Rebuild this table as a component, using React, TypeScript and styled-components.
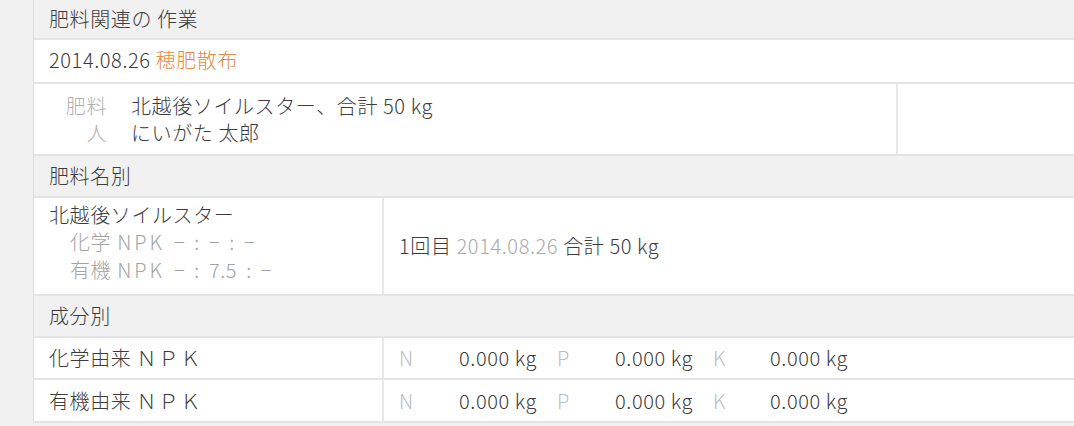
import React from "react";
import styled, { createGlobalStyle } from "styled-components";

const GlobalStyle = createGlobalStyle`
  * { box-sizing: border-box; }
  body {
    margin: 0;
    background: #f1f1f1;
    font-family: "Noto Sans CJK JP", "Noto Sans", sans-serif;
    font-size: 20px;
    font-weight: 300;
    letter-spacing: 0.6px;
    color: #3c3c3c;
    overflow: hidden;
  }
`;

const Panel = styled.div`
  margin-left: 33px;
  border-left: 1px solid #dcdcdc;
  background: #fff;
`;

const SectionHeader = styled.div<{ $h: number }>`
  height: ${(p) => p.$h}px;
  display: flex;
  align-items: center;
  padding: 0 15px;
  background: #f1f1f1;
  border-bottom: 2px solid #e4e4e4;
  line-height: 26px;
`;

const Row = styled.div<{ $h: number }>`
  height: ${(p) => p.$h}px;
  display: flex;
  border-bottom: 2px solid #e4e4e4;
  background: #fff;
`;

const Cell = styled.div<{ $w?: number; $divider?: boolean; $pb?: number }>`
  flex: ${(p) => (p.$w ? `0 0 ${p.$w}px` : "1 1 auto")};
  display: flex;
  flex-direction: column;
  justify-content: center;
  padding: 0 15px ${(p) => p.$pb ?? 0}px;
  border-right: ${(p) => (p.$divider ? "2px solid #e8e8e8" : "none")};
  line-height: 26px;
  white-space: nowrap;
`;

const Orange = styled.span`
  color: #e38b3f;
`;

const Muted = styled.span`
  color: #ababab;
`;

const Wide = styled.span`
  letter-spacing: 2px;
`;

const DetailGrid = styled.div`
  display: grid;
  grid-template-columns: 58px auto;
  column-gap: 24px;
  line-height: 27px;
`;

const DetailLabel = styled.span`
  text-align: right;
  color: #b0b0b0;
`;

const NameCell = styled.div`
  flex: 0 0 350px;
  padding: 4px 15px 7px;
  border-right: 2px solid #e8e8e8;
  white-space: nowrap;
`;

const Name = styled.div`
  line-height: 26px;
`;

const SubLine = styled.div`
  display: flex;
  align-items: baseline;
  padding-left: 21px;
  line-height: 27.5px;
  color: #a4a4a4;
  &:first-of-type {
    margin-top: 4px;
  }
`;

const NpkText = styled.span`
  margin-left: 6px;
  letter-spacing: 3px;
`;

const Ratio = styled.span`
  display: inline-flex;
  gap: 9px;
  margin-left: 9px;
`;

const NpkGrid = styled.div`
  display: grid;
  grid-template-columns: 60px 98px 58px 98px 57px auto;
  align-items: center;
`;

const NpkLabel = styled.span`
  color: #bdbdbd;
`;

const ratios = [
  { kind: "化学", parts: ["−", ":", "−", ":", "−"] },
  { kind: "有機", parts: ["−", ":", "7.5", ":", "−"] },
];

const components = ["化学由来", "有機由来"];

export default function App() {
  return (
    <>
      <GlobalStyle />
      <Panel>
        <SectionHeader $h={40}>肥料関連の 作業</SectionHeader>
        <Row $h={44}>
          <Cell $pb={3}>
            <div>
              2014.08.26 <Orange>穂肥散布</Orange>
            </div>
          </Cell>
        </Row>
        <Row $h={72}>
          <Cell $w={864} $divider>
            <DetailGrid>
              <DetailLabel>肥料</DetailLabel>
              <span>北越後ソイルスター、合計 50 kg</span>
              <DetailLabel>人</DetailLabel>
              <span>にいがた 太郎</span>
            </DetailGrid>
          </Cell>
          <Cell />
        </Row>

        <SectionHeader $h={42}>肥料名別</SectionHeader>
        <Row $h={98}>
          <NameCell>
            <Name>北越後ソイルスター</Name>
            {ratios.map((r) => (
              <SubLine key={r.kind}>
                <span>{r.kind}</span>
                <NpkText>NPK</NpkText>
                <Ratio>
                  {r.parts.map((p, i) => (
                    <span key={i}>{p}</span>
                  ))}
                </Ratio>
              </SubLine>
            ))}
          </NameCell>
          <Cell>
            <div>
              1回目 <Muted>2014.08.26</Muted> 合計 50 kg
            </div>
          </Cell>
        </Row>

        <SectionHeader $h={42}>成分別</SectionHeader>
        {components.map((name, i) => (
          <Row key={name} $h={i === 0 ? 42 : 43}>
            <Cell $w={350} $divider>
              <div>
                {name} <Wide>ＮＰＫ</Wide>
              </div>
            </Cell>
            <Cell>
              <NpkGrid>
                <NpkLabel>N</NpkLabel>
                <span>0.000 kg</span>
                <NpkLabel>P</NpkLabel>
                <span>0.000 kg</span>
                <NpkLabel>K</NpkLabel>
                <span>0.000 kg</span>
              </NpkGrid>
            </Cell>
          </Row>
        ))}
      </Panel>
    </>
  );
}
